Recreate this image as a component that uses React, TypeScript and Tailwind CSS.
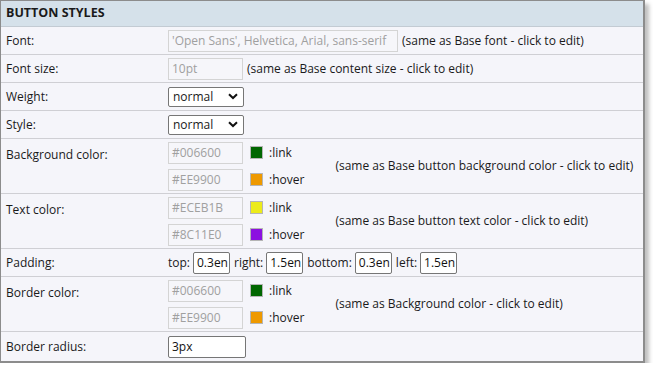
import React from "react";

const ro = "h-[22px] border border-[#d4d4d4] bg-[#f6f6fa] px-[3px] text-[12px] text-[#a0a0a0] leading-[20px]";
const ed = "h-[22px] border border-[#767676] rounded-[2px] bg-white px-[3px] text-[12px] text-[#111] leading-[20px]";

const Label = ({ children }: { children: React.ReactNode }) => (
  <div className="w-[167px] shrink-0 pl-[5px]">{children}</div>
);

const Row = ({ children, h = "h-[28px]" }: { children: React.ReactNode; h?: string }) => (
  <div className={`flex items-center border-b border-[#cfcfd4] ${h}`}>{children}</div>
);

const Select = () => (
  <div className="flex h-[20px] w-[76px] items-center justify-between rounded-[2px] border border-[#767676] bg-white pl-[4px] pr-[5px]">
    <span>normal</span>
    <svg width="10" height="7" viewBox="0 0 10 7">
      <path d="M1 1.2 L5 5 L9 1.2" fill="none" stroke="#111" strokeWidth="2" />
    </svg>
  </div>
);

const ColorPair = ({
  a,
  b,
  note,
}: {
  a: string;
  b: string;
  note: string;
}) => (
  <div className="flex items-center">
    <div className="flex flex-col gap-[5px]">
      {[
        [a, ":link"],
        [b, ":hover"],
      ].map(([v, t]) => (
        <div key={t} className="flex items-center">
          <div className={`${ro} w-[75px]`}>{v}</div>
          <div className="ml-[7px] h-[13px] w-[13px] border border-[#b5b5b5]" style={{ background: v }} />
          <span className="ml-[6px]">{t}</span>
        </div>
      ))}
    </div>
    <span className="ml-[31px]">{note}</span>
  </div>
);

export default function App() {
  return (
    <div className="bg-white p-0 text-[12px] text-[#1a1a1a]" style={{ fontFamily: "'Open Sans', sans-serif" }}>
      <div className="w-[645px] border-l border-t border-r-2 border-b-2 border-[#8c8c8c] bg-[#f5f5fa] shadow-[4px_4px_4px_rgba(0,0,0,0.25)]">
        <div className="flex h-[26px] items-center border-b border-[#c3cbd3] bg-[#d5e1ea] pl-[5px] text-[12.5px] font-bold">
          BUTTON STYLES
        </div>
        <Row>
          <Label>Font:</Label>
          <div className={`${ro} w-[230px]`}>'Open Sans', Helvetica, Arial, sans-serif</div>
          <span className="ml-[4px]">(same as Base font - click to edit)</span>
        </Row>
        <Row>
          <Label>Font size:</Label>
          <div className={`${ro} w-[75px]`}>10pt</div>
          <span className="ml-[4px]">(same as Base content size - click to edit)</span>
        </Row>
        <Row>
          <Label>Weight:</Label>
          <Select />
        </Row>
        <Row>
          <Label>Style:</Label>
          <Select />
        </Row>
        <Row h="h-[55px]">
          <Label>
            <div className="-mt-[20px]">Background color:</div>
          </Label>
          <ColorPair a="#006600" b="#EE9900" note="(same as Base button background color - click to edit)" />
        </Row>
        <Row h="h-[55px]">
          <Label>
            <div className="-mt-[20px]">Text color:</div>
          </Label>
          <ColorPair a="#ECEB1B" b="#8C11E0" note="(same as Base button text color - click to edit)" />
        </Row>
        <Row>
          <Label>Padding:</Label>
          <span>top:</span>
          <div className={`${ed} ml-[3px] w-[37px]`}>0.3en</div>
          <span className="ml-[4px]">right:</span>
          <div className={`${ed} ml-[3px] w-[37px]`}>1.5en</div>
          <span className="ml-[4px]">bottom:</span>
          <div className={`${ed} ml-[3px] w-[37px]`}>0.3en</div>
          <span className="ml-[4px]">left:</span>
          <div className={`${ed} ml-[3px] w-[37px]`}>1.5en</div>
        </Row>
        <Row h="h-[55px]">
          <Label>
            <div className="-mt-[20px]">Border color:</div>
          </Label>
          <ColorPair a="#006600" b="#EE9900" note="(same as Background color - click to edit)" />
        </Row>
        <div className="flex h-[29px] items-center">
          <Label>Border radius:</Label>
          <div className={`${ed} w-[78px]`}>3px</div>
        </div>
      </div>
    </div>
  );
}
